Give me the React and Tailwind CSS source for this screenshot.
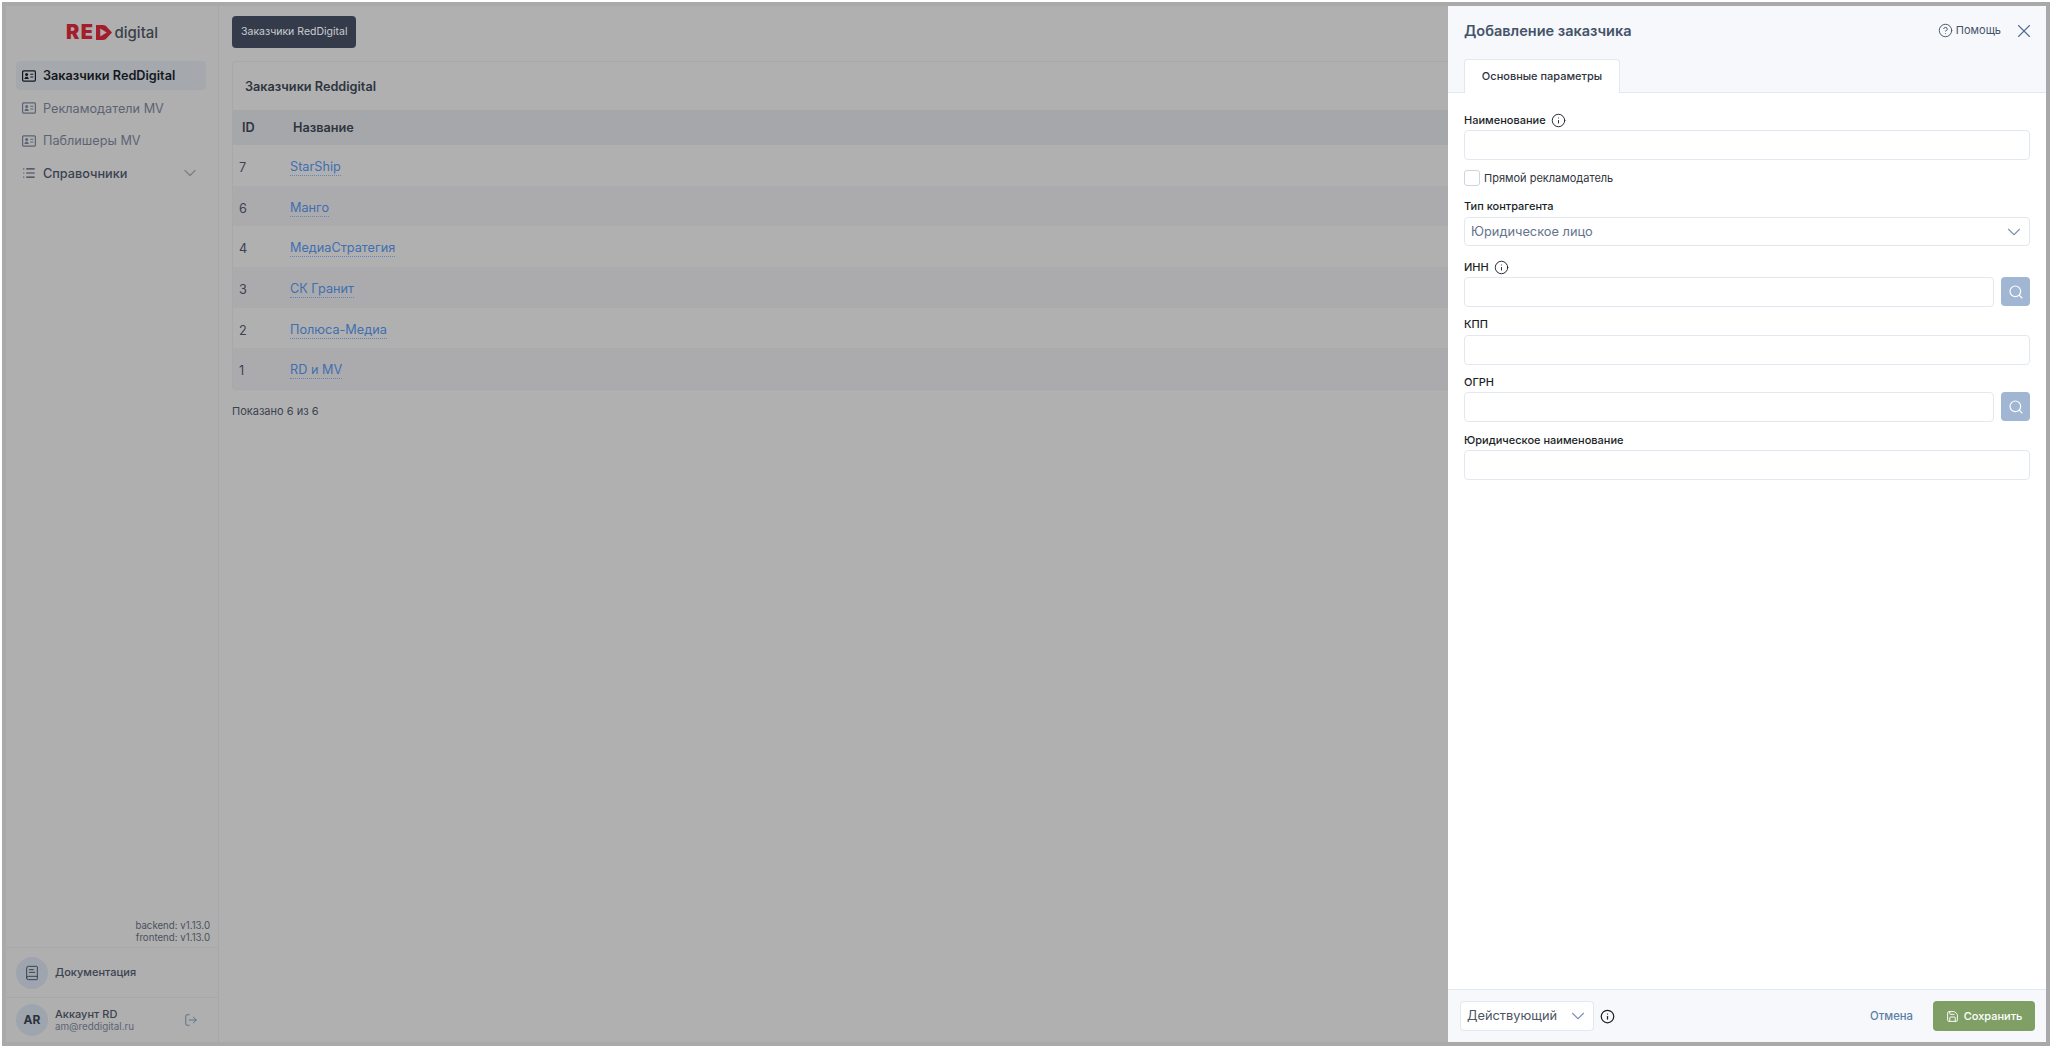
import { BookText, ChevronDown, CircleHelp, Info, List, LogOut, Save, Search, X } from 'lucide-react';

const rows = [
  { id: 7, name: 'StarShip' },
  { id: 6, name: 'Манго' },
  { id: 4, name: 'МедиаСтратегия' },
  { id: 3, name: 'СК Гранит' },
  { id: 2, name: 'Полюса-Медиа' },
  { id: 1, name: 'RD и MV' },
];

function CardIcon() {
  return (
    <svg viewBox="0 0 14 12" className="h-[12px] w-[14px] shrink-0" fill="none">
      <rect x="0.6" y="0.9" width="12.8" height="10.2" rx="1" stroke="currentColor" strokeWidth="1.2" />
      <circle cx="4.6" cy="4.6" r="1.5" fill="currentColor" />
      <path d="M2.4 9c.2-1.6 1.1-2.2 2.2-2.2S6.600 7.400 6.800 9z" fill="currentColor" />
      <path d="M8.300 4.300h3M8.300 7h3" stroke="currentColor" strokeWidth="1.100" />
    </svg>
  );
}

function LogoMark() {
  return (
    <svg viewBox="0 0 15 15" className="ml-[1px] h-[15px] w-[16px]" preserveAspectRatio="none" fill="#a31d2b">
      <path d="M0 0h6.500c1 0 1.800.3 2.600.800L15 7.500l-5.900 6.700c-.8.500-1.600.800-2.600.800H0z" />
      <path d="M4 3.500v8l6-4z" fill="#afafaf" />
    </svg>
  );
}

function Field({ label, info, search, className = '' }) {
  return (
    <div className={className}>
      <div className="flex h-[16px] items-center gap-[5px] text-[11px] font-medium leading-none text-[#1b1f27]">
        {label}
        {info && <Info className="h-[15px] w-[15px] text-[#1b1f27]" strokeWidth={1.5} />}
      </div>
      <div className="mt-[2px] flex items-start gap-[7px]">
        <div className="h-[30px] flex-1 rounded-[4px] border border-[#e2e8f0] bg-white" />
        {search && (
          <div className="flex h-[29px] w-[29px] items-center justify-center rounded-[4px] bg-[#a0b6d3]">
            <Search className="h-[16px] w-[16px] text-white" strokeWidth={1.75} />
          </div>
        )}
      </div>
    </div>
  );
}

export default function App() {
  return (
    <div className="h-screen w-screen overflow-hidden bg-white p-[2px] font-['Inter',sans-serif]">
      <div className="flex h-full border-4 border-[#a9a9a9] bg-[#b0b0b0]">
        {/* sidebar */}
        <aside className="flex w-[213px] shrink-0 flex-col border-r border-[#a6a8aa] bg-[#afafaf]">
          <div className="flex h-[52px] items-center justify-center">
            <span className="text-[20px] font-black leading-none tracking-[1.5px] text-[#a31d2b]">RE</span>
            <LogoMark />
            <span className="ml-[3px] text-[15px] font-medium leading-none text-[#3a3f49]">digital</span>
          </div>
          <nav className="mt-[3px] flex flex-col gap-[3.6px] pl-[10px] pr-[12px] text-[12.7px]">
            <div className="flex h-[29px] items-center gap-[7px] rounded-[4px] bg-[#a5a9ad] px-[6px] font-semibold text-[#15181e]">
              <CardIcon />
              Заказчики RedDigital
            </div>
            <div className="flex h-[29px] items-center gap-[7px] px-[6px] text-[#5c6473]">
              <CardIcon />
              Рекламодатели MV
            </div>
            <div className="flex h-[29px] items-center gap-[7px] px-[6px] text-[#5c6473]">
              <CardIcon />
              Паблишеры MV
            </div>
            <div className="flex h-[29px] items-center gap-[7px] px-[6px] font-medium text-[#3b4250]">
              <List className="h-[14px] w-[14px]" />
              Справочники
              <ChevronDown className="ml-auto h-[20px] w-[20px] text-[#7a808a]" strokeWidth={1.5} />
            </div>
          </nav>
          <div className="mt-auto pb-[3px] pr-[8px] text-right text-[9.7px] leading-[12px] text-[#4b5160]">
            <div>backend: v1.13.0</div>
            <div>frontend: v1.13.0</div>
          </div>
          <div className="flex h-[50px] items-center gap-[7px] border-t border-[#a6a8aa] px-[10px]">
            <div className="flex h-[32px] w-[32px] items-center justify-center rounded-full bg-[#9ea5ae]">
              <BookText className="h-[16px] w-[16px] text-[#3b4250]" strokeWidth={1.5} />
            </div>
            <span className="text-[11px] font-medium text-[#3b4250]">Документация</span>
          </div>
          <div className="flex h-[45px] items-center gap-[7px] border-t border-[#a6a8aa] px-[10px]">
            <div className="flex h-[32px] w-[32px] items-center justify-center rounded-full bg-[#9ea5ae] text-[12px] font-bold text-[#2c323d]">
              AR
            </div>
            <div className="leading-none">
              <div className="text-[11px] font-medium text-[#3b4250]">Аккаунт RD</div>
              <div className="mt-[2px] text-[9.8px] text-[#5c6473]">am@reddigital.ru</div>
            </div>
            <LogOut className="ml-auto mr-[10px] h-[14px] w-[14px] text-[#54698a]" strokeWidth={1.5} />
          </div>
        </aside>

        {/* main */}
        <main className="min-w-0 flex-1 overflow-hidden pl-[13px] pt-[10px]">
          <div className="inline-flex h-[32px] items-center rounded-[4px] bg-[#343b4a] px-[9px] text-[10.5px] text-[#c9ccd2]">
            Заказчики RedDigital
          </div>
          <div className="mt-[13px] rounded-l-[4px] border border-r-0 border-[#a6a8aa]">
            <div className="flex h-[48px] items-center px-[12px] pt-[2px] text-[12.7px] font-semibold text-[#2f3540]">
              Заказчики Reddigital
            </div>
            <div className="flex h-[35px] items-center bg-[#a6a7aa] text-[12.7px] font-semibold text-[#2f3540]">
              <div className="w-[60px] pl-[9px]">ID</div>
              <div>Название</div>
            </div>
            {rows.map((r, i) => (
              <div key={r.id} className={`flex h-[40.7px] items-center pt-[4px] text-[12.7px] ${i % 2 ? 'bg-[#ababad]' : 'bg-[#b0b0b0]'}`}>
                <div className="w-[57px] pl-[6px] text-[#3b4250]">{r.id}</div>
                <span className="border-b border-dotted border-[#5f86bd] leading-[16px] text-[#3f6fb0]">{r.name}</span>
              </div>
            ))}
          </div>
          <div className="mt-[13px] text-[11px] text-[#3b4250]">Показано 6 из 6</div>
        </main>

        {/* panel */}
        <section className="flex w-[598px] shrink-0 flex-col bg-white">
          <div className="h-[87px] shrink-0 border-b border-[#e2e8f0] bg-[#f6f8fb] px-[16px]">
            <div className="flex h-[49px] items-center">
              <h2 className="text-[14.5px] font-semibold text-[#45536a]">Добавление заказчика</h2>
              <div className="ml-auto flex items-center gap-[3px] text-[11px] text-[#45536a]">
                <CircleHelp className="h-[15px] w-[15px]" strokeWidth={1.5} />
                Помощь
              </div>
              <X className="ml-[12px] mr-[-5px] h-[22px] w-[22px] text-[#4f6f97]" strokeWidth={1.25} />
            </div>
            <div className="mt-[4px] flex h-[34px] w-[156px] items-center justify-center rounded-t-[4px] border border-b-0 border-[#e2e8f0] bg-white text-[11px] font-medium text-[#2f3540]">
              Основные параметры
            </div>
          </div>

          <div className="flex-1 px-[16px] pt-[19px]">
            <Field label="Наименование" info />
            <label className="mt-[10px] flex h-[16px] items-center gap-[4px] text-[11px] text-[#2f3540]">
              <span className="h-[16px] w-[16px] rounded-[3px] border border-[#cbd5e1] bg-white" />
              Прямой рекламодатель
            </label>
            <div className="mt-[12px]">
              <div className="flex h-[16px] items-center text-[11px] font-medium leading-none text-[#1b1f27]">Тип контрагента</div>
              <div className="mt-[3px] flex h-[29px] items-center justify-between rounded-[4px] border border-[#e2e8f0] bg-white pl-[6px] pr-[4px] text-[12.8px] text-[#64748b]">
                Юридическое лицо
                <ChevronDown className="h-[22px] w-[22px] text-[#7d93b2]" strokeWidth={1.25} />
              </div>
            </div>
            <Field label="ИНН" info search className="mt-[13px]" />
            <Field label="КПП" className="mt-[9.7px]" />
            <Field label="ОГРН" search className="mt-[9.7px]" />
            <Field label="Юридическое наименование" className="mt-[9.7px]" />
          </div>

          <div className="flex h-[53px] shrink-0 items-center border-t border-[#e2e8f0] bg-[#f6f8fb] pl-[12px] pr-[11px]">
            <div className="flex h-[30px] w-[134px] items-center justify-between rounded-[4px] border border-[#e2e8f0] bg-white pl-[6px] pr-[4px] text-[12.8px] text-[#4b5563]">
              Действующий
              <ChevronDown className="h-[22px] w-[22px] text-[#7d93b2]" strokeWidth={1.25} />
            </div>
            <Info className="ml-[6px] h-[15px] w-[15px] text-[#1b1f27]" strokeWidth={2} />
            <span className="ml-auto text-[11.3px] font-medium text-[#5a7fa8]">Отмена</span>
            <div className="ml-[20px] flex h-[30px] w-[102px] items-center justify-center gap-[5px] rounded-[4px] bg-[#7f9f66] text-[11px] font-medium text-white">
              <Save className="h-[13px] w-[13px]" strokeWidth={1.75} />
              Сохранить
            </div>
          </div>
        </section>
      </div>
    </div>
  );
}
